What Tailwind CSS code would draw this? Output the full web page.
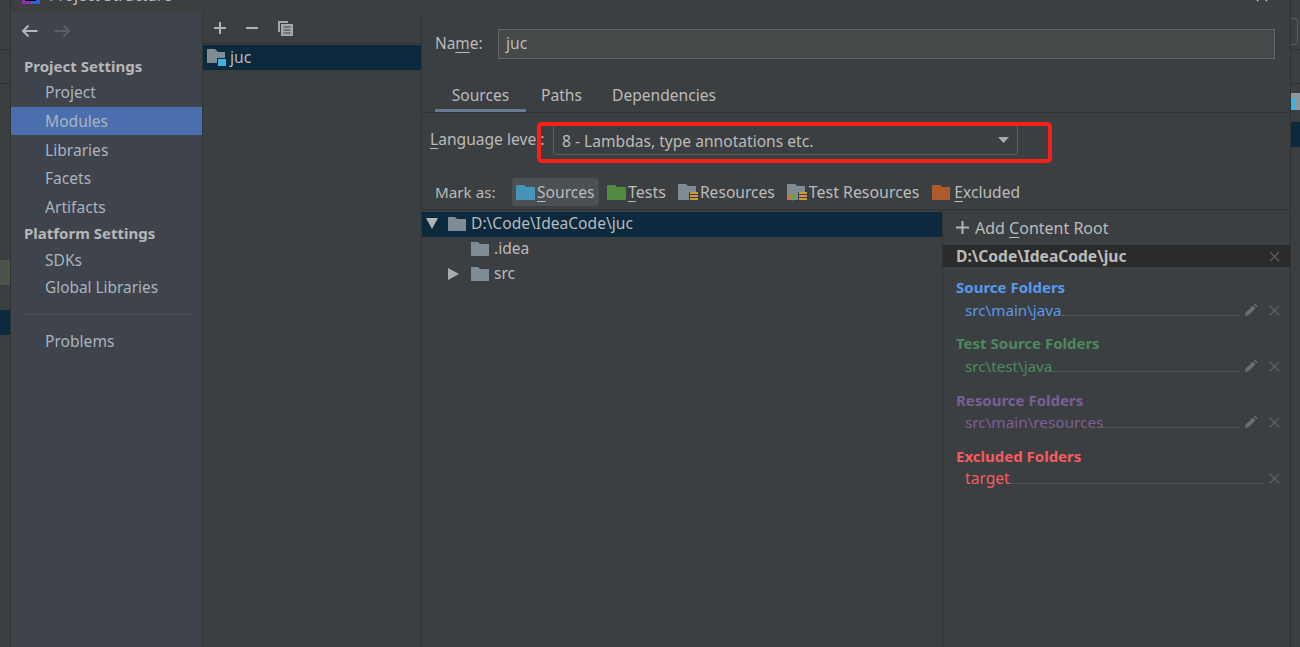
<!DOCTYPE html>
<html lang="en">
<head>
    <meta charset="UTF-8">
    <title>Project Structure</title>
    <script src="https://cdn.jsdelivr.net/npm/@tailwindcss/browser@4"></script>
</head>
<body class="bg-[#3c3f41]">

<div class="w-[1300px] h-[647px] flex overflow-hidden bg-[#3c3f41] text-[#bbbbbb] text-[15.6px] leading-5 font-['Noto_Sans',sans-serif]">

    <!-- IDE behind the dialog, left -->
    <div class="w-[11px] shrink-0 border-r border-[#2f3132] flex flex-col">
        <div class="h-[50px] border-b border-[#323232]"></div>
        <div class="h-[34px] border-b border-[#323232]"></div>
        <div class="h-[176px]"></div>
        <div class="h-[25px] bg-[#49544a]"></div>
        <div class="h-[25px]"></div>
        <div class="h-[25px] bg-[#0d293e]"></div>
    </div>

    <!-- Dialog -->
    <div class="w-[1279px] shrink-0 flex flex-col">
        <div class="h-[13px] shrink-0 flex overflow-hidden pl-[11px] pr-[21px] justify-between">
            <div class="flex gap-[9px] h-[4px] items-end">
                <svg class="w-[18px] h-[18px] shrink-0" viewBox="0 0 18 18"><path d="M0 0h18v18H0z" fill="#2a64d8"/><path d="M0 10h9v8H0z" fill="#8a2fb0"/><path d="M3 0h11v15H3z" fill="#000"/><path d="M5 11h6v1H5z" fill="#fff"/></svg>
                <span class="whitespace-nowrap leading-[18px]">Project Structure</span>
            </div>
            <svg class="w-[14px] h-[14px] -mt-[11px]" viewBox="0 0 14 14"><path d="M2 2l10 10M12 2L2 12" stroke="#c8c8c8" stroke-width="1.3" fill="none"/></svg>
        </div>

        <div class="flex flex-1 min-h-0 relative">
            <!-- Settings sidebar -->
            <nav class="w-[192px] shrink-0 bg-[#3e434c] border-r border-[#323232] text-[#a9b4bf]">
                <div class="h-[36px] flex items-center gap-[16px] pl-[10px]">
                    <svg class="w-[17px] h-[14px]" viewBox="0 0 17 14"><path d="M16.500 7H2M7.500 1.500L2 7l5.500 5.500" stroke="#b4b6b8" stroke-width="2" fill="none"/></svg>
                    <svg class="w-[17px] h-[14px]" viewBox="0 0 17 14"><path d="M0.500 7H15M9.500 1.500L15 7l-5.500 5.500" stroke="#5a5e62" stroke-width="2" fill="none"/></svg>
                </div>
                <div class="h-[24px] mt-[5px] flex items-center pl-[13px] text-[15px] font-bold text-[#b5b7b9]">Project Settings</div>
                <div class="h-[29px] flex items-center pl-[34px] pb-[2px]">Project</div>
                <div class="h-[28px] flex items-center pl-[34px] bg-[#4b6eaf]">Modules</div>
                <div class="h-[29px] flex items-center pl-[34px]">Libraries</div>
                <div class="h-[28px] flex items-center pl-[34px]">Facets</div>
                <div class="h-[29px] flex items-center pl-[34px]">Artifacts</div>
                <div class="h-[24px] flex items-center pl-[13px] text-[15px] font-bold text-[#b5b7b9]">Platform Settings</div>
                <div class="h-[29px] flex items-center pl-[34px]">SDKs</div>
                <div class="h-[28px] flex items-center pl-[34px] text-[15.4px]">Global Libraries</div>
                <div class="h-[13px] mx-[11px] border-b border-[#4d4f50]"></div>
                <div class="h-[52px] flex items-center pl-[34px]">Problems</div>
            </nav>

            <!-- Module list -->
            <div class="w-[219px] shrink-0 border-r border-[#323232]">
                <div class="h-[31px] border-b border-[#323232] flex items-center gap-[18px] pl-[10px]">
                    <svg class="w-[14px] h-[14px]" viewBox="0 0 14 14"><path d="M7 1v12M1 7h12" stroke="#b0b2b4" stroke-width="2"/></svg>
                    <svg class="w-[14px] h-[14px]" viewBox="0 0 14 14"><path d="M1 7h12" stroke="#b0b2b4" stroke-width="2"/></svg>
                    <svg class="w-[17px] h-[17px]" viewBox="0 0 17 17"><path d="M1 1h10v2H3v9H1z" fill="#a4a6a8"/><path d="M4 4h12v12H4z" fill="#a4a6a8"/><path d="M6.500 7h7M6.500 10h7M6.500 13h7" stroke="#3c3f41"/></svg>
                </div>
                <div class="h-[25px] mt-[1px] bg-[#0d293e] flex items-center pl-[4px] gap-[2px]">
                    <svg class="w-[20px] h-[19px]" viewBox="0 0 20 19"><path d="M0 1h8l3 3h7v11H0z" fill="#7f8c95"/><path d="M10 10h10v9H10z" fill="#0d293e"/><path d="M11 11h8v7h-8z" fill="#3db3e3"/></svg>
                    <span class="pl-[1px] pb-[2px]">juc</span>
                </div>
            </div>

            <!-- Module detail -->
            <div class="flex-1 min-w-0 flex flex-col">
                <div class="flex items-center h-[30px] mt-[16px] pl-[13px] pr-[15px]">
                    <span class="w-[63px] shrink-0 pb-[1px] text-[15.4px]">Na<u class="underline-offset-[3px]">m</u>e:</span>
                    <div class="flex-1 h-[30px] bg-[#45494a] border border-[#646464] pl-[7px] pb-[2px] flex items-center">juc</div>
                </div>

                <div class="h-[33px] mt-[21px] border-b border-[#323232] flex pl-[13px]">
                    <div class="w-[91px] h-[32px] flex justify-center items-center pt-[1px] border-b-[3px] border-[#687a8f]">Sources</div>
                    <div class="w-[86px] flex items-center pb-[3px] pl-[15px]">Paths</div>
                    <div class="flex items-center pb-[3px]">Dependencies</div>
                </div>

                <div class="h-[65px] pt-[12px] pl-[8px] flex items-start relative">
                    <span class="w-[123px] shrink-0 pt-[4px] whitespace-nowrap"><u class="underline-offset-[3px]">L</u>anguage level:</span>
                    <div class="w-[465px] h-[30px] border border-[#5e6060] rounded-[3px] bg-[#3c3f41] flex items-center justify-between pl-[8px] pr-[8px]">
                        <span class="pt-[2px]">8 - Lambdas, type annotations etc.</span>
                        <svg class="w-[11px] h-[6px]" viewBox="0 0 11 6"><path d="M0 0h11L5.500 6z" fill="#a9abad"/></svg>
                    </div>
                    <!-- annotation drawn on top of the screenshot -->
                    <div class="absolute left-[115px] top-[9px] w-[515px] h-[41px] border-4 border-[#fb2015] rounded-[5px]"></div>
                </div>

                <div class="h-[32px] border-b border-[#323232] flex pl-[13px] pb-[3px]">
                    <span class="w-[77px] shrink-0 flex items-center text-[15.2px]">Mark as:</span>
                    <div class="w-[87px] h-[28px] rounded-[4px] bg-[#4b5052] flex items-center pl-[4px] gap-[2px]">
                        <svg class="w-[19px] h-[15px]" viewBox="0 0 19 15"><path d="M0 0h8l2 2h9v13H0z" fill="#4a93b8"/></svg>
                        <span><u class="underline-offset-[3px]">S</u>ources</span>
                    </div>
                    <div class="flex items-center pl-[8px] gap-[2px]">
                        <svg class="w-[19px] h-[15px]" viewBox="0 0 19 15"><path d="M0 0h8l2 2h9v13H0z" fill="#528a41"/></svg>
                        <span class="text-[16px]"><u class="underline-offset-[3px]">T</u>ests</span>
                    </div>
                    <div class="flex items-center pl-[12px] gap-[2px]">
                        <svg class="w-[20px] h-[18px] mt-[2px]" viewBox="0 0 20 18"><path d="M0 0h8l2 2h8v6h-7v8H0z" fill="#7f8c95"/><path d="M12 9h8M12 12h8M12 15h8" stroke="#d19a3a" stroke-width="2"/></svg>
                        <span>Resources</span>
                    </div>
                    <div class="flex items-center pl-[12px] gap-[2px]">
                        <svg class="w-[20px] h-[18px] mt-[2px]" viewBox="0 0 20 18"><path d="M0 0h8l2 2h8v6h-7v8H0z" fill="#7f8c95"/><path d="M12 9h8M12 12h8M12 15h8" stroke="#d19a3a" stroke-width="2"/><path d="M3.500 9v8L0 13z" fill="#e8662c"/><path d="M5 9v8l4-4z" fill="#5aa83c"/></svg>
                        <span class="text-[15.9px]">Test Resources</span>
                    </div>
                    <div class="flex items-center pl-[13px] gap-[4px]">
                        <svg class="w-[18px] h-[15px]" viewBox="0 0 18 15"><path d="M0 0h8l2 2h8v13H0z" fill="#ae5a2e"/></svg>
                        <span><u class="underline-offset-[3px]">E</u>xcluded</span>
                    </div>
                </div>

                <div class="flex flex-1 min-h-0">
                    <!-- Content root tree -->
                    <div class="w-[521px] shrink-0 pt-[2px] border-r border-[#323232]">
                        <div class="h-[25px] bg-[#0d293e] flex items-center pl-[4px] pb-[2px]">
                            <svg class="w-[12px] h-[11px]" viewBox="0 0 12 11"><path d="M0 0h12L6 11z" fill="#b0b2b4"/></svg>
                            <svg class="w-[18px] h-[14px] ml-[10px]" viewBox="0 0 18 14"><path d="M0 0h7l2 2h9v12H0z" fill="#7f8c95"/></svg>
                            <span class="pl-[5px] pb-[2px]">D:\Code\IdeaCode\juc</span>
                        </div>
                        <div class="h-[25px] flex items-center pl-[49px] pb-[2px]">
                            <svg class="w-[18px] h-[14px]" viewBox="0 0 18 14"><path d="M0 0h7l2 2h9v12H0z" fill="#7f8c95"/></svg>
                            <span class="pl-[5px] pb-[2px]">.idea</span>
                        </div>
                        <div class="h-[25px] flex items-center pl-[26px] pb-[2px]">
                            <svg class="w-[11px] h-[12px]" viewBox="0 0 11 12"><path d="M0 0l11 6-11 6z" fill="#a9abad"/></svg>
                            <svg class="w-[18px] h-[14px] ml-[12px]" viewBox="0 0 18 14"><path d="M0 0h7l2 2h9v12H0z" fill="#7f8c95"/></svg>
                            <span class="pl-[5px] pb-[2px]">src</span>
                        </div>
                    </div>

                    <!-- Content root folders -->
                    <div class="flex-1 min-w-0 flex flex-col">
                        <div class="h-[35px] flex items-center pl-[13px] gap-[6px]">
                            <svg class="w-[13px] h-[13px]" viewBox="0 0 13 13"><path d="M6.500 0v13M0 6.500h13" stroke="#b0b2b4" stroke-width="2"/></svg>
                            <span class="text-[16px]">Add <u class="underline-offset-[3px]">C</u>ontent Root</span>
                        </div>
                        <div class="h-[22px] bg-[#2b2b2b] flex items-center justify-between pl-[13px] pr-[10px] font-bold">
                            <span>D:\Code\IdeaCode\juc</span>
                            <svg class="w-[11px] h-[11px]" viewBox="0 0 11 11"><path d="M1 1l9 9M10 1l-9 9" stroke="#5f6365" stroke-width="1.200"/></svg>
                        </div>

                        <div class="h-[20px] mt-[10px] pl-[13px] flex items-center text-[15px] font-bold text-[#5899ee]">Source Folders</div>
                        <div class="h-[24px] mt-[1px] pl-[22px] pr-[10px] flex items-center text-[#5899ee]">
                            <span class="text-[15.2px]">src\main\java</span>
                            <span class="flex-1 self-end mb-[6px] border-b border-dotted border-[#6a6d6f]"></span>
                            <svg class="w-[14px] h-[14px] ml-[4px]" viewBox="0 0 14 14"><path d="M1 13l.800-3.500 7-7 2.700 2.700-7 7zM9.800 1.500l1-1 2.700 2.700-1 1z" fill="#6b6e70"/></svg>
                            <svg class="w-[11px] h-[11px] ml-[11px]" viewBox="0 0 11 11"><path d="M1 1l9 9M10 1l-9 9" stroke="#5f6365" stroke-width="1.200"/></svg>
                        </div>

                        <div class="h-[20px] mt-[11px] pl-[13px] flex items-center text-[15px] font-bold text-[#4c8a5e]">Test Source Folders</div>
                        <div class="h-[24px] mt-[1px] pl-[22px] pr-[10px] flex items-center text-[#4c8a5e]">
                            <span class="text-[15.2px]">src\test\java</span>
                            <span class="flex-1 self-end mb-[6px] border-b border-dotted border-[#6a6d6f]"></span>
                            <svg class="w-[14px] h-[14px] ml-[4px]" viewBox="0 0 14 14"><path d="M1 13l.800-3.500 7-7 2.700 2.700-7 7zM9.800 1.500l1-1 2.700 2.700-1 1z" fill="#6b6e70"/></svg>
                            <svg class="w-[11px] h-[11px] ml-[11px]" viewBox="0 0 11 11"><path d="M1 1l9 9M10 1l-9 9" stroke="#5f6365" stroke-width="1.200"/></svg>
                        </div>

                        <div class="h-[20px] mt-[12px] pl-[13px] flex items-center text-[15px] font-bold text-[#7a5f96]">Resource Folders</div>
                        <div class="h-[24px] pl-[22px] pr-[10px] flex items-center text-[#7a5f96]">
                            <span class="text-[15.3px]">src\main\resources</span>
                            <span class="flex-1 self-end mb-[6px] border-b border-dotted border-[#6a6d6f]"></span>
                            <svg class="w-[14px] h-[14px] ml-[4px]" viewBox="0 0 14 14"><path d="M1 13l.800-3.500 7-7 2.700 2.700-7 7zM9.800 1.500l1-1 2.700 2.700-1 1z" fill="#6b6e70"/></svg>
                            <svg class="w-[11px] h-[11px] ml-[11px]" viewBox="0 0 11 11"><path d="M1 1l9 9M10 1l-9 9" stroke="#5f6365" stroke-width="1.200"/></svg>
                        </div>

                        <div class="h-[20px] mt-[12px] pl-[13px] flex items-center text-[15px] font-bold text-[#f95a5e]">Excluded Folders</div>
                        <div class="h-[24px] pl-[22px] pr-[10px] flex items-center text-[#f95a5e]">
                            <span>target</span>
                            <span class="flex-1 self-end mb-[6px] border-b border-dotted border-[#6a6d6f]"></span>
                            <svg class="w-[11px] h-[11px] ml-[6px]" viewBox="0 0 11 11"><path d="M1 1l9 9M10 1l-9 9" stroke="#5f6365" stroke-width="1.200"/></svg>
                        </div>
                    </div>
                </div>
            </div>
        </div>
    </div>

    <!-- IDE behind the dialog, right -->
    <div class="w-[10px] shrink-0 border-l border-[#2f3132] flex flex-col">
        <div class="h-[18px]"></div>
        <div class="h-[27px] w-[7px] border border-l-0 border-[#5a5d5f] rounded-r-[4px]"></div>
        <div class="h-[5px] border-b border-[#323232]"></div>
        <div class="h-[34px] border-b border-[#323232]"></div>
        <div class="h-[9px]"></div>
        <div class="h-[17px] bg-[#8e999f] flex items-end"><span class="w-[3px] h-[12px] bg-[#3db3e3] ml-[1px]"></span></div>
        <div class="h-[12px]"></div>
        <div class="h-[25px] bg-[#0d293e]"></div>
    </div>
</div>

</body>
</html>
